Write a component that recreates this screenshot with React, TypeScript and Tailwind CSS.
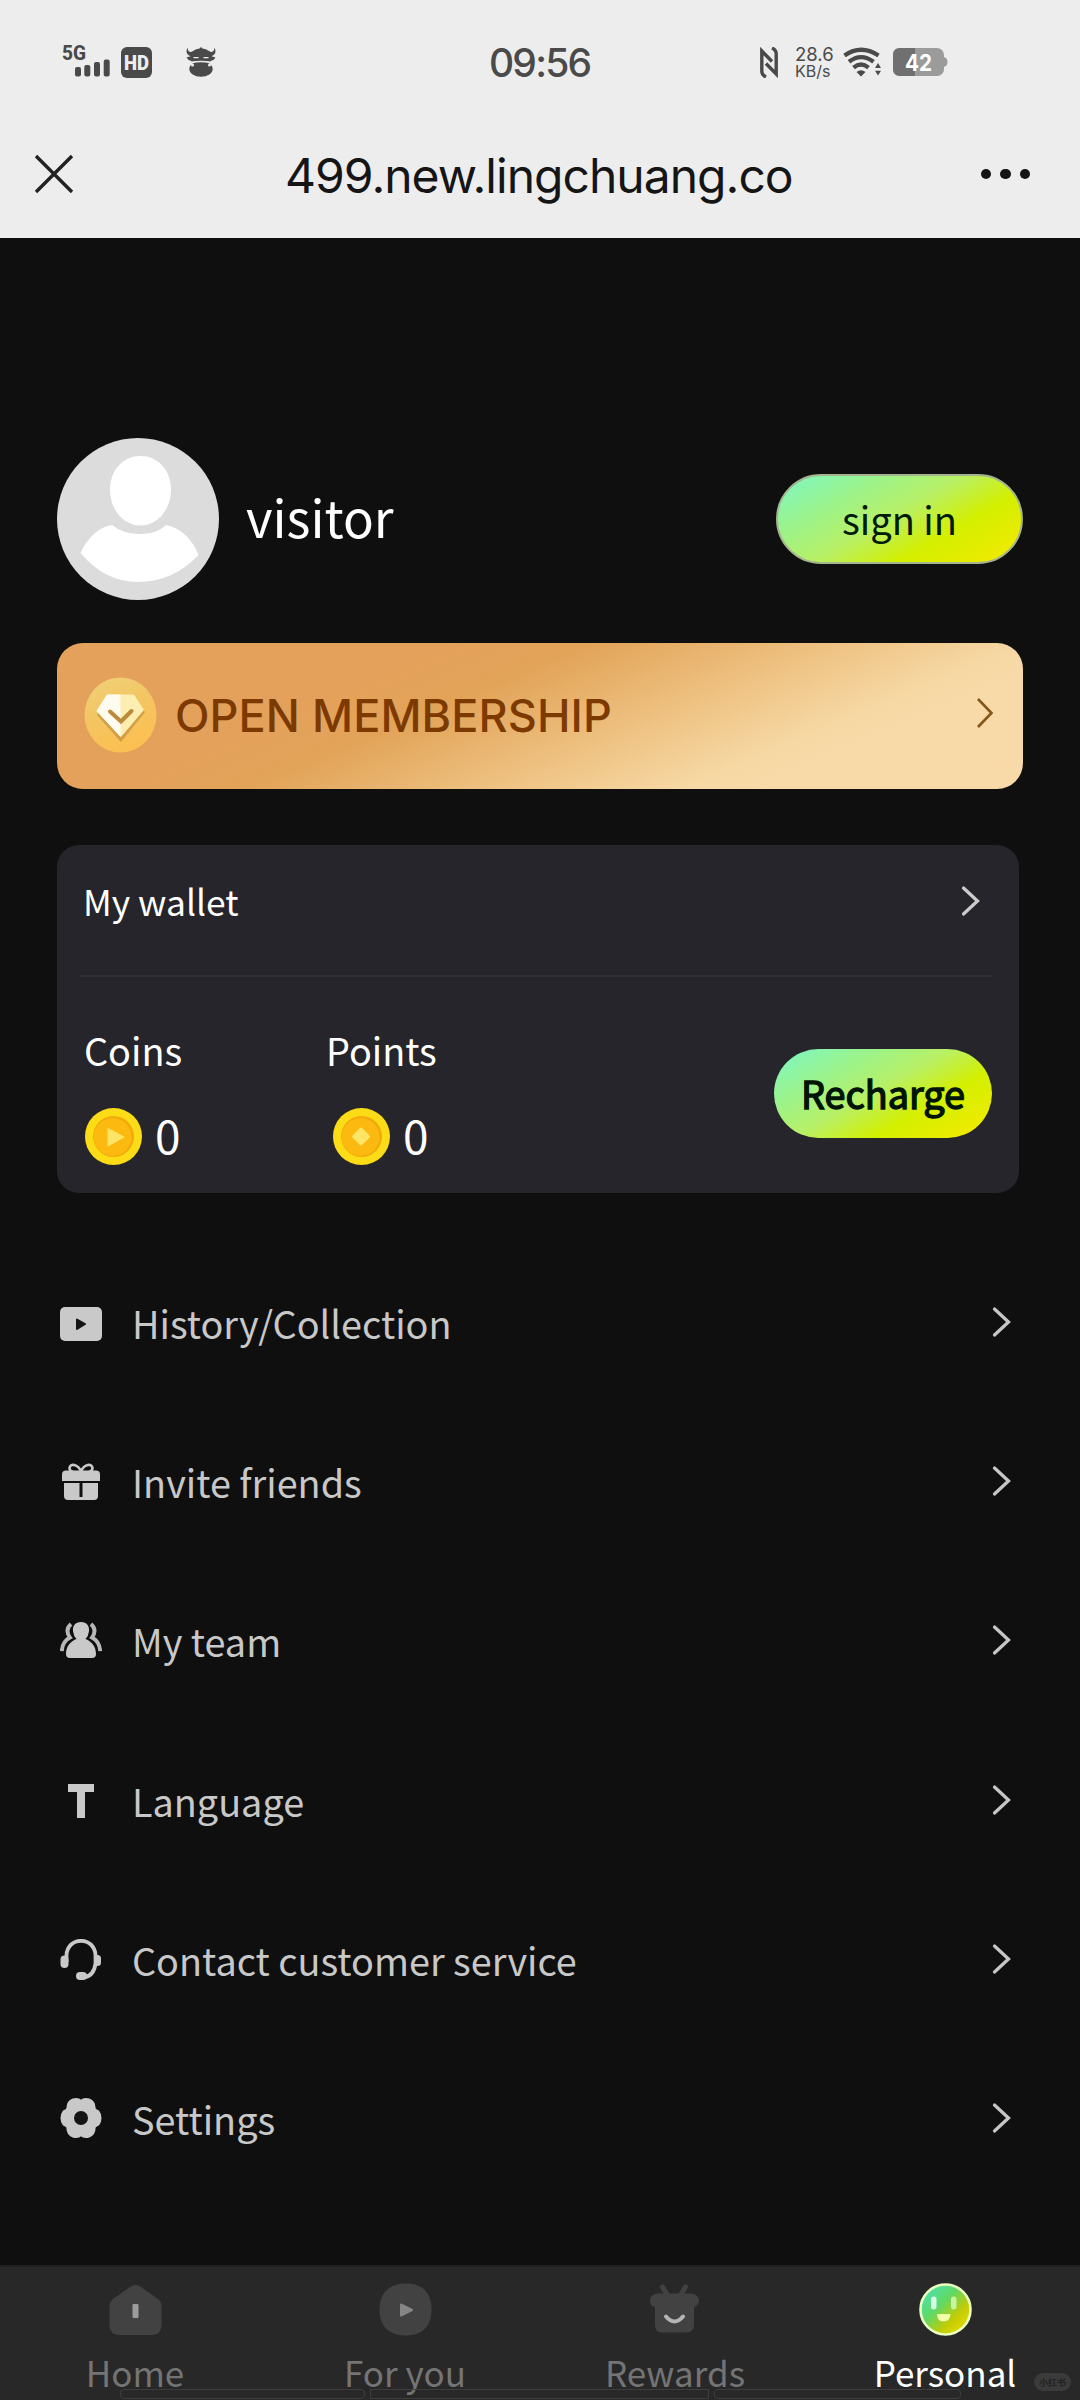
import type { ReactNode } from "react";

const CJK = "font-['Noto_Sans_CJK_SC','Noto_Sans',sans-serif]";
const INTER = "font-['Inter','Roboto',sans-serif]";

type Tab = { label: string; icon: ReactNode; active?: boolean };

const menu: { label: string; icon: ReactNode }[] = [
  { label: "History/Collection", icon: <HistoryIcon /> },
  { label: "Invite friends", icon: <GiftIcon /> },
  { label: "My team", icon: <TeamIcon /> },
  { label: "Language", icon: <LanguageIcon /> },
  { label: "Contact customer service", icon: <HeadsetIcon /> },
  { label: "Settings", icon: <GearIcon /> },
];

const tabs: Tab[] = [
  { label: "Home", icon: <HomeIcon /> },
  { label: "For you", icon: <ForYouIcon /> },
  { label: "Rewards", icon: <RewardsIcon /> },
  { label: "Personal", icon: <PersonalIcon />, active: true },
];

export default function App() {
  return (
    <div className={`flex h-[2400px] w-[1080px] flex-col overflow-hidden bg-[#0f0f0f] ${CJK}`}>
      <header className="h-[238px] shrink-0 bg-[#ededed]">
        <StatusBar />
        <TitleBar />
      </header>
      <main className="flex-1 pt-[200px] pl-[57px]">
        <Profile />
        <Membership />
        <Wallet />
        <ul className="mt-[50px]">
          {menu.map((item) => (
            <li key={item.label} className="flex h-[159.3px] w-[962px] items-center">
              <span className="flex w-12 justify-center">{item.icon}</span>
              <span className="ml-[27px] flex-1 text-[37.8px] leading-none text-[#c8c8c8]">{item.label}</span>
              <Chevron className="mr-[8px] -mt-0.5 text-[#c6c6c6]" />
            </li>
          ))}
        </ul>
      </main>
      <TabBar />
    </div>
  );
}

function StatusBar() {
  return (
    <div className="flex h-[124px] items-center text-[#4a4a4a]">
      <svg className="ml-[60px] h-[52px] w-[52px] overflow-visible" viewBox="60 36 52 52" fill="currentColor">
        <text x="62" y="59.5" fontSize="20.5" fontWeight="800" fontFamily="Roboto" textLength="24" lengthAdjust="spacingAndGlyphs">5G</text>
        <rect x="75" y="67" width="6" height="9.5" rx="2" />
        <rect x="84.3" y="65" width="6" height="11.5" rx="2" />
        <rect x="94" y="62" width="6" height="14.5" rx="2" />
        <rect x="103.7" y="59.5" width="6" height="17" rx="2" />
      </svg>
      <svg className="ml-[9px] h-[31px] w-[31px]" viewBox="0 0 31 31">
        <rect width="31" height="31" rx="6" fill="#4a4a4a" />
        <text x="3" y="22.5" fontSize="20" fontWeight="900" fontFamily="Roboto" fill="#ededed" textLength="25" lengthAdjust="spacingAndGlyphs">HD</text>
      </svg>
      <svg className="ml-[34px] h-[30px] w-[30px]" viewBox="0 0 30 30" fill="currentColor">
        <path d="M1.5 .5C1.500 4.500 4 6 7 4Q10 1.800 13.500 1.500L15 0L16.500 1.500Q20 1.800 23 4C26 6 28.500 4.500 28.500 .5Q31.500 6.500 25.500 9.200L29.500 10.500Q28 13.500 25 13.800L24.500 15H5.500L5 13.800Q2 13.500 .5 10.500L4.500 9.200Q-1.500 6.500 1.500 .5Z" />
        <ellipse cx="15" cy="22" rx="11.7" ry="7.8" />
        <path d="M7.500 10.700H12.500M17.500 10.700H22.500" stroke="#ededed" strokeWidth="1.2" />
        <path d="M5 15.300Q15 13.500 25 15.300" fill="none" stroke="#ededed" strokeWidth="1.5" />
        <circle cx="6.5" cy="18" r="1.5" fill="#ededed" />
        <circle cx="23.5" cy="18" r="1.5" fill="#ededed" />
      </svg>
      <span className={`ml-[273px] w-[102px] text-[39px] font-medium leading-none tracking-[-1.8px] ${INTER}`}>09:56</span>
      <svg className="ml-[169px] h-[31px] w-[18px]" viewBox="0 0 18 31" fill="none" stroke="currentColor" strokeWidth="3.4">
        <path d="M6 30Q1.800 28 1.800 24V4L12 14.500" />
        <path d="M12 1Q16.200 3 16.200 7V27L6 16.500" />
      </svg>
      <span className={`ml-[17px] flex w-[38px] flex-col ${INTER}`}>
        <span className="text-[18.5px] leading-[18px]">28.6</span>
        <span className="text-[16px] leading-[17px]">KB/s</span>
      </span>
      <svg className="ml-[10px] h-[30px] w-[40px]" viewBox="0 0 40 30" fill="none" stroke="currentColor" strokeWidth="4.3">
        <path d="M1.500 8.500Q18 -3 35.500 8.500" />
        <path d="M6 14.800Q18 5.500 30.500 14.800" />
        <path d="M10.500 20.600Q18 14.500 25.500 20.600" />
        <path d="M13.500 25Q18 21.500 22.500 25L18 29.500Z" fill="currentColor" stroke="none" />
        <path d="M32 21L35 16L38 21ZM32 23.800L35 28.600L38 23.800Z" fill="currentColor" stroke="none" />
      </svg>
      <svg className="ml-[10px] h-[28px] w-[55px]" viewBox="0 0 55 28">
        <rect width="51" height="28" rx="7" fill="#9b9b9b" />
        <path d="M51 9Q54.500 10 54.500 14T51 19Z" fill="#9b9b9b" />
        <path d="M7 0H22V28H7Q0 28 0 21V7Q0 0 7 0Z" fill="#707070" />
        <text x="12" y="22.5" fontSize="22.5" fontWeight="700" fontFamily="Inter" fill="#fff" textLength="27" lengthAdjust="spacingAndGlyphs">42</text>
      </svg>
    </div>
  );
}

function TitleBar() {
  return (
    <div className="flex h-[100px] items-center pr-[50px] pl-[34px]">
      <svg className="h-10 w-10" viewBox="0 0 40 40" stroke="#222" strokeWidth="3.4">
        <path d="M2 2L38 38M38 2L2 38" />
      </svg>
      <h1 className={`ml-[211px] flex-1 pt-1 text-[48px] leading-none tracking-[-0.98px] whitespace-nowrap text-[#151515] ${INTER}`}>499.new.lingchuang.co</h1>
      <div className="flex gap-[9px]">
        <span className="size-[10.5px] rounded-full bg-[#151515]" />
        <span className="size-[10.5px] rounded-full bg-[#151515]" />
        <span className="size-[10.5px] rounded-full bg-[#151515]" />
      </div>
    </div>
  );
}

function Profile() {
  return (
    <section className="flex h-[162px] w-[966px] items-center">
      <svg className="size-[162px]" viewBox="0 0 162 162">
        <circle cx="81" cy="81" r="81" fill="#dcdcdc" />
        <path d="M83.500 18C100 18 114 31 114 52C114 72 100 87.500 83.500 87.500S53 72 53 52C53 31 67 18 83.500 18Z" fill="#fff" />
        <path d="M55 87Q66 96 83 96T109 87C124 90 136 102 141.500 117Q116 144 81 144Q48 144 23.500 115C31 99 42 89 55 87Z" fill="#fff" />
      </svg>
      <span className="ml-[27px] flex-1 pb-[5px] text-[51px] leading-none text-white">visitor</span>
      <button className="h-[90px] w-[247px] rounded-full border-2 border-[#a4b48e] bg-[linear-gradient(150deg,#84f6b6_8%,#9cf38a_27%,#b8f066_47%,#d4ef00_68%,#f3ea00_96%)] bg-origin-border text-[38px] leading-none text-[#001a08]">
        sign in
      </button>
    </section>
  );
}

function Membership() {
  return (
    <section className="mt-[43px] flex h-[146px] w-[966px] items-center rounded-[26px] bg-[linear-gradient(157deg,#e4a15b_30%,#e2a459_41%,#eec181_59%,#f6d8a4_74%,#f7daa8_80%)]">
      <svg className="-mt-0.5 ml-[27px] h-[76px] w-[73px]" viewBox="0 0 73 76">
        <defs>
          <linearGradient id="badge" x1="0" y1="0" x2=".4" y2="1">
            <stop offset="0" stopColor="#f0d27a" />
            <stop offset=".5" stopColor="#f3c563" />
            <stop offset="1" stopColor="#fcc052" />
          </linearGradient>
        </defs>
        <ellipse cx="36.5" cy="38" rx="36" ry="37.5" fill="url(#badge)" />
        <path d="M22 21H50L61 35L37 65L13 38Z" fill="#bd8a3c" opacity=".65" />
        <path d="M23 17.500H50L60 33L37 60L12.500 34Z" fill="#fcedb0" />
        <path d="M23 17.500H36.500V60L12.500 34Z" fill="#fffbee" />
        <path d="M26 34.500L37 44.500L47.500 34" fill="none" stroke="#bd8a3c" strokeWidth="4" strokeLinecap="round" />
      </svg>
      <span className={`ml-[18px] flex-1 pb-[2px] text-[45px] font-medium leading-none tracking-[0.1px] whitespace-nowrap text-[#7d3a00] ${INTER}`}>OPEN MEMBERSHIP</span>
      <svg className="mr-[29px] -mt-1.5 h-[32px] w-[18px]" viewBox="0 0 18 32" fill="none" stroke="#85551a" strokeWidth="2.6">
        <path d="M2 2L15.500 16L2 30" />
      </svg>
    </section>
  );
}

function Wallet() {
  return (
    <section className="mt-[56px] h-[348px] w-[962px] rounded-[22px] bg-[#26252b]">
      <div className="mr-[27px] ml-[23px] flex h-[132px] items-center border-b-2 border-[#2f2e33] pb-[18px]">
        <span className="ml-[3px] flex-1 text-[35.4px] leading-none text-white">My wallet</span>
        <Chevron className="mr-3 text-[#ccc]" />
      </div>
      <div className="flex pt-[43px] pl-[28px]">
        <Balance label="Coins" amount={0} className="w-[242px]">
          <path d="M23 20.500L39 29L23 38Z" fill="#ffe566" stroke="#ffe566" strokeLinejoin="round" />
        </Balance>
        <Balance label="Points" amount={0} inset className="flex-1">
          <path d="M28 21L35.500 28.500L28 36L20.500 28.500Z" fill="#ffe566" stroke="#ffe566" strokeWidth="3" strokeLinejoin="round" />
        </Balance>
        <button className="mt-[29px] mr-[27px] h-[89px] w-[218px] rounded-full bg-[linear-gradient(150deg,#84f6b6_8%,#9cf38a_27%,#b8f066_47%,#d4ef00_68%,#f3ea00_96%)] pb-0.5 text-[37.8px] leading-none text-[#001405] [-webkit-text-stroke:1.4px_#001405]">
          Recharge
        </button>
      </div>
    </section>
  );
}

function Balance({ label, amount, inset, className, children }: { label: string; amount: number; inset?: boolean; className: string; children: ReactNode }) {
  return (
    <div className={className}>
      <div className="-ml-px text-[37.8px] leading-[60px] text-white">{label}</div>
      <div className={inset ? "mt-[28px] ml-[6px] flex items-center" : "mt-[28px] flex items-center"}>
        <svg className="size-[57px]" viewBox="0 0 57 57">
          <circle cx="28.5" cy="28.5" r="28.5" fill="#fbdc16" />
          <circle cx="28.5" cy="28.5" r="20.5" fill="#f2a90c" />
          <circle cx="27.5" cy="29" r="19" fill="#fcb90f" />
          {children}
        </svg>
        <span className="ml-[13px] pb-1.5 text-[46px] leading-none text-white">{amount}</span>
      </div>
    </div>
  );
}

function Chevron({ className }: { className: string }) {
  return (
    <svg className={`h-[34px] w-[20px] ${className}`} viewBox="0 0 20 34" fill="none" stroke="currentColor" strokeWidth="3.3" strokeLinecap="round">
      <path d="M3.500 4L17.500 17L3.500 30" />
    </svg>
  );
}

function HistoryIcon() {
  return (
    <svg className="mt-0.5 h-[34px] w-[42px]" viewBox="0 0 42 34">
      <rect width="42" height="34" rx="5" fill="#c9c9c9" />
      <path d="M17 12.500L25 17L17 22Z" fill="#151515" stroke="#151515" strokeWidth="2" strokeLinejoin="round" />
    </svg>
  );
}

function GiftIcon() {
  return (
    <svg className="h-[37px] w-[38px]" viewBox="0 0 38 37">
      <path d="M19 8.500C16 1 8 0 7.500 5Q7.500 8 11 9M19 8.500C22 1 30 0 30.500 5Q30.500 8 27 9" fill="none" stroke="#c9c9c9" strokeWidth="2.6" />
      <path d="M4 7.500H34Q38 7.500 38 11.500V18H0V11.500Q0 7.500 4 7.500Z" fill="#c9c9c9" />
      <path d="M2 20H17.500V34H20.500V20H36V33Q36 37 32 37H6Q2 37 2 33Z" fill="#c9c9c9" />
    </svg>
  );
}

function TeamIcon() {
  return (
    <svg className="-mt-0.5 h-[36px] w-[42px]" viewBox="0 0 42 36" fill="#c9c9c9">
      <path d="M21 0C27 0 29.500 4 29 9Q28.500 14 25.500 17C32 19.500 36 25 36 32Q36 36 32 36H10Q6 36 6 32C6 25 10 19.500 16.500 17Q13.500 14 13 9C12.500 4 15 0 21 0Z" />
      <path d="M11 2Q4.500 8 10 15.500C5 18 2.200 23 1.800 29M31 2Q37.500 8 32 15.500C37 18 39.800 23 40.200 29" fill="none" stroke="#b8b8b8" strokeWidth="3.8" />
    </svg>
  );
}

function LanguageIcon() {
  return (
    <svg className="h-[34px] w-[26px]" viewBox="0 0 26 34">
      <path d="M0 4H26M13 1V34" stroke="#c9c9c9" strokeWidth="8" />
    </svg>
  );
}

function HeadsetIcon() {
  return (
    <svg className="h-[42px] w-[42px]" viewBox="0 0 42 41" fill="none" stroke="#c9c9c9" strokeLinecap="round">
      <path d="M6.500 22V16C7 -3.500 35 -3.500 35.500 16V24Q34 37 23 38" strokeWidth="3.8" />
      <path d="M4.500 20V24.500" strokeWidth="8" />
      <path d="M37.500 19V23" strokeWidth="7" />
      <path d="M20 36.500H23" strokeWidth="8" />
    </svg>
  );
}

function GearIcon() {
  return (
    <svg className="-mt-0.5 h-[42px] w-[42px]" viewBox="0 0 42 42">
      <path d="M13 2.500Q18 1 21 4Q24 1 29 2.500Q35 5 34.500 11.500Q36 13.500 38.500 14.500Q40.500 17 40.500 21T38.500 27.500Q36 28.500 34.500 30.500Q35 37 29 39.500Q24 41 21 38Q18 41 13 39.500Q7 37 7.500 30.500Q6 28.500 3.500 27.500Q1.500 25 1.500 21T3.500 14.500Q6 13.500 7.500 11.500Q7 5 13 2.500Z" fill="#c9c9c9" stroke="#c9c9c9" strokeWidth="2" />
      <circle cx="21" cy="21" r="7" fill="#151515" />
    </svg>
  );
}

function TabBar() {
  return (
    <nav className="relative grid h-[135px] shrink-0 grid-cols-4 border-t-2 border-[#222] bg-[#282828]">
      {tabs.map((tab) => (
        <div key={tab.label} className="flex flex-col items-center pt-4">
          {tab.icon}
          <span className={tab.active ? "mt-[11px] text-[35px] leading-[50px] text-white" : "mt-[11px] text-[35px] leading-[50px] text-[#747474]"}>{tab.label}</span>
        </div>
      ))}
      {/* gesture bar outline over the labels */}
      <div className="absolute bottom-[1px] left-[120px] flex h-[10px] w-[841px] gap-[5px]">
        <span className="w-[245px] rounded-sm border border-[#3d3d3d]" />
        <span className="w-[339px] border border-[#3d3d3d]" />
        <span className="flex-1 rounded-sm border border-[#3d3d3d]" />
      </div>
      <span className="absolute right-[9px] bottom-[9px] flex h-[18px] w-[37px] items-center justify-center rounded-full bg-[#3b3b3b] text-[9px] leading-none font-bold text-[#222]">
        小红书
      </span>
    </nav>
  );
}

function HomeIcon() {
  return (
    <svg className="size-[53px]" viewBox="0 0 53 53">
      <path d="M21 4Q26.500 0 32 4L49 16Q52.500 19 52.500 23V42Q52.500 52 42 52H11Q.5 52 .5 42V23Q.5 19 4 16Z" fill="#424242" />
      <rect x="23.5" y="21" width="6" height="14" rx="1" fill="#9c9c9c" />
    </svg>
  );
}

function ForYouIcon() {
  return (
    <svg className="size-[53px]" viewBox="0 0 53 53">
      <path d="M26.500 .5C43 .5 52.500 9 52.500 26.500S43 52.500 26.500 52.500S.5 43 .5 26.500S10 .5 26.500 .5Z" fill="#424242" />
      <path d="M22 21.500L33 27L22 32.500Z" fill="#868686" stroke="#868686" strokeWidth="2" strokeLinejoin="round" />
    </svg>
  );
}

function RewardsIcon() {
  return (
    <svg className="size-[53px]" viewBox="0 0 53 53" fill="#424242">
      <path d="M13.500 4L19 13M36.500 4L31 13" stroke="#424242" strokeWidth="5" strokeLinecap="round" />
      <path d="M8 10.500H43Q50 12 50 18Q49 23 45 24V42Q45 49.500 37 49.500H13Q6 49.500 6 42V24Q1 23 1 18Q1 12 8 10.500Z" />
      <path d="M17 33.500Q25.500 43.500 34 33.500" fill="none" stroke="#b5b5b5" strokeWidth="4" strokeLinecap="round" />
    </svg>
  );
}

function PersonalIcon() {
  return (
    <svg className="size-[53px]" viewBox="0 0 53 53">
      <defs>
        <linearGradient id="face" x1=".1" y1=".1" x2=".85" y2=".85">
          <stop offset="0" stopColor="#4fe3b0" />
          <stop offset=".4" stopColor="#5fd866" />
          <stop offset=".75" stopColor="#c0cc08" />
          <stop offset="1" stopColor="#e0d800" />
        </linearGradient>
      </defs>
      <circle cx="26.5" cy="26.5" r="25" fill="url(#face)" stroke="#e8ffc0" strokeWidth="2.6" />
      <rect x="12" y="13.5" width="5.5" height="13" rx="2.7" fill="#d4ffe6" />
      <rect x="32" y="13.5" width="5.5" height="13" rx="2.7" fill="#c6f5a0" />
      <path d="M18 31H31.500Q31 38.500 24.500 38.500T18 31Z" fill="#f0ffa8" />
    </svg>
  );
}
